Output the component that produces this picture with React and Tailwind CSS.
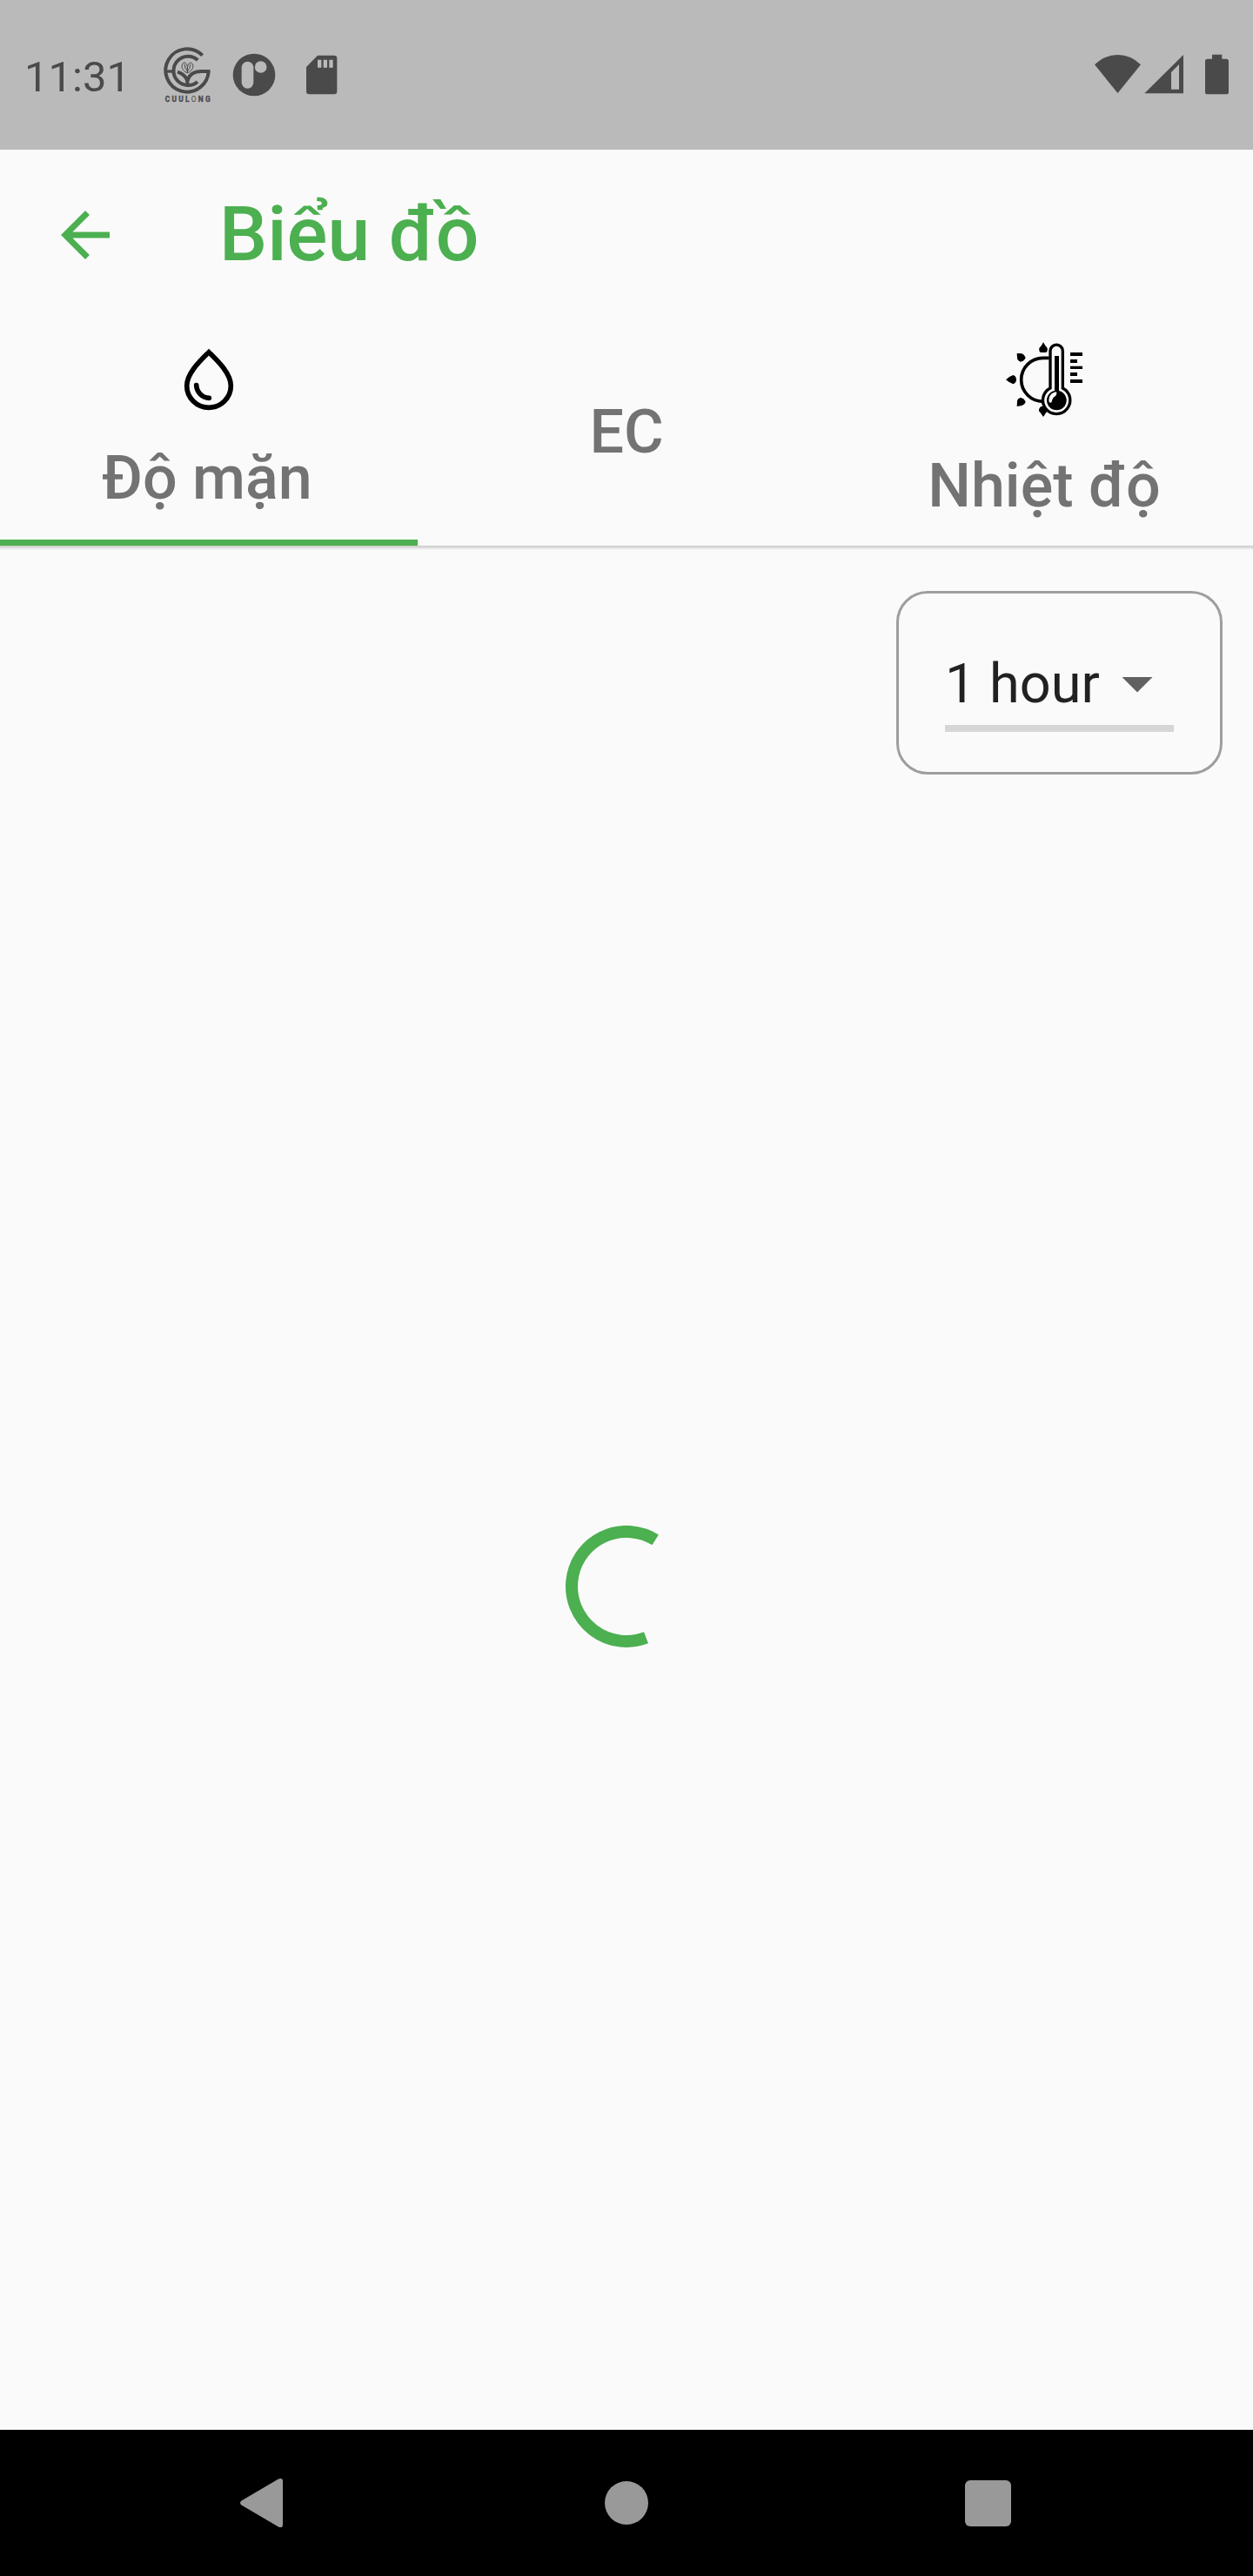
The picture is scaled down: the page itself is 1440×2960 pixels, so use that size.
const GREEN = "#4caf50";

function Logo() {
  return (
    <svg className="-mt-[2px] ml-[43px] h-[70px] w-[60px]" viewBox="555 30 180 210" fill="none" stroke="#4a4a4a">
      <path d="M698 71A74 74 0 1 0 719 124" strokeWidth="12" />
      <path d="M682 87A50 50 0 1 0 681 162" strokeWidth="12" />
      <path d="M570 126H600" strokeWidth="10" />
      <path d="M612 128Q638 136 646 158Q656 126 694 126H724" strokeWidth="12" />
      <path d="M646 150V176" strokeWidth="12" />
      <path d="M646 131C628 126 622 106 632 97C642 92 648 104 646 131C644 104 652 92 661 97C671 106 664 126 646 131M636 101Q637 118 645 123M657 101Q655 118 648 123" strokeWidth="3" />
      <text x="569" y="231" fill="#4a4a4a" stroke="#4a4a4a" strokeWidth="1" fontSize="25" fontWeight="700" fontFamily="Roboto, sans-serif" textLength="156" lengthAdjust="spacing">
        CUUL<tspan fontWeight="400" strokeWidth="0">O</tspan>NG
      </text>
    </svg>
  );
}

function StatusBar() {
  return (
    <header className="flex h-[172px] shrink-0 items-center bg-[#bababa] text-[#4a4a4a]">
      <span className="mt-[4px] ml-[28px] w-[114px] whitespace-nowrap text-[49px] leading-none">11:31</span>
      <Logo />
      <svg className="ml-[22px] h-[50px] w-[50px]" viewBox="802 64 150 150">
        <circle cx="877" cy="139" r="73" fill="#4a4a4a" />
        <rect x="834" y="93" width="41" height="93" rx="20.5" fill="#bababa" />
        <circle cx="900" cy="112" r="20.5" fill="#bababa" />
      </svg>
      <svg className="ml-[33px] h-[50px] w-[40px]" viewBox="1050 64 120 150">
        <path d="M1095 72H1152Q1162 72 1162 82V196Q1162 206 1152 206H1066Q1056 206 1056 196V112Z" fill="#4a4a4a" />
        <path d="M1095 87H1108V114H1095ZM1115 87H1128V114H1115ZM1135 87H1148V114H1135Z" fill="#bababa" />
      </svg>
      <svg className="mr-[20px] ml-auto h-[50px] w-[170px]" viewBox="90 64 510 150" fill="#4a4a4a">
        <path d="M114 104Q148 70 193.500 70Q239 70 273 104L193.500 202Z" />
        <path fillRule="evenodd" d="M286 203L420 70V203ZM378 130V189H405V103Z" />
        <path d="M519 69H553V84H568Q576 84 576 92V198Q576 206 568 206H503Q495 206 495 198V92Q495 84 503 84H519Z" />
      </svg>
    </header>
  );
}

function DropIcon() {
  return (
    <svg className="h-[84px] w-[84px]" viewBox="354 42 252 252" fill="none" stroke="#000" strokeWidth="17">
      <path d="M480 74C452 102 404 146 404 190A76 75 0 0 0 556 190C556 146 508 102 480 74Z" />
      <path d="M437 188C438 212 458 232 481 232" strokeLinecap="round" />
    </svg>
  );
}

function ThermometerIcon() {
  return (
    <svg className="h-[94px] w-[94px]" viewBox="339 57 282 282">
      <path d="M497 124H476A75 75 0 0 0 476 274" fill="none" stroke="#000" strokeWidth="11" />
      <path d="M477 70Q484 83 491 90Q493 105 484 105H470Q461 105 463 90Q471 83 477 70Z" />
      <path d="M386 108L404 109Q415 115 416 123Q410 137 398 137Q387 132 387 124Z" />
      <path d="M348 199Q360 187 373 183Q384 187 384 199Q384 210 373 214Q360 210 348 199Z" />
      <path d="M386 291L404 288Q415 282 416 275Q410 262 398 261Q387 266 387 273Z" />
      <path d="M477 327Q470 316 462 307Q461 296 470 291H484L491 307Q484 316 477 327Z" />
      <path d="M501 228V100A21.500 21.500 0 0 1 544 100V228A47 47 0 1 1 501 228Z" fill="#fafafa" stroke="#000" strokeWidth="10" />
      <path d="M516 117H531V250H516Z" />
      <circle cx="523" cy="270" r="34" />
      <path d="M497 276C494 257 504 243 522 241Q526 247 520 254Q508 260 506 276Q501 281 497 276Z" fill="#fafafa" />
      <path d="M570 105H612V117H570ZM570 129H594V141H570ZM570 152H612V162H570ZM570 174H594V186H570ZM570 198H612V210H570Z" />
    </svg>
  );
}

function Tab({ active, className, children }) {
  return (
    <div className="flex w-[480px] flex-col">
      <div className={"flex h-[252px] flex-col items-center text-[70px] font-medium leading-[82px] text-[#737373] " + className}>
        {children}
      </div>
      <div className={active ? "h-[7px] bg-[#4caf50]" : "h-[7px]"} />
    </div>
  );
}

export default function App() {
  return (
    <div className="flex h-[2960px] w-[1440px] flex-col overflow-hidden bg-[#fafafa] font-['Roboto',sans-serif]">
      <StatusBar />
      <div className="flex h-[196px] shrink-0 items-center">
        <svg className="ml-[56px] h-[84px] w-[84px]" viewBox="0 0 24 24" fill={GREEN}>
          <path d="M20 11H7.830l5.590-5.590L12 4l-8 8 8 8 1.410-1.410L7.830 13H20v-2z" />
        </svg>
        <h1 className="ml-[112px] text-[87.5px] font-medium leading-none text-[#4caf50]">Biểu đồ</h1>
      </div>
      <nav className="flex h-[259px] shrink-0">
        <Tab active className="pt-[26px]">
          <DropIcon />
          <span className="mt-[30px] mr-[4px]">Độ mặn</span>
        </Tab>
        <Tab className="justify-center pt-[4px]">
          <span>EC</span>
        </Tab>
        <Tab className="pt-[21px]">
          <ThermometerIcon />
          <span className="mt-[34px]">Nhiệt độ</span>
        </Tab>
      </nav>
      <div className="h-[5px] shrink-0 bg-linear-to-b from-[#c8c8c8] to-[#fafafa]" />
      <div className="mt-[47px] mr-[35px] flex h-[211px] w-[375px] shrink-0 flex-col self-end rounded-[36px] border-[3.5px] border-[#9e9e9e] px-[53px] pt-[61px]">
        <div className="flex h-[84px] items-center text-[63px] leading-none text-[#212121]">
          <span className="w-[179px] shrink-0 whitespace-nowrap">1 hour</span>
          <svg className="h-[84px] w-[84px] shrink-0" viewBox="0 0 24 24" fill="#616161">
            <path d="M7 10l5 5 5-5z" />
          </svg>
        </div>
        <div className="mt-[6px] h-[8px] w-[263px] shrink-0 bg-[#d6d6d6]" />
      </div>
      <main className="flex grow items-start justify-center pt-[863px]">
        <svg className="h-[140px] w-[140px]" viewBox="-70 -70 140 140" fill="none" stroke={GREEN} strokeWidth="14">
          <path d="M33.200 -53.600A63 63 0 1 0 22.500 58.800" />
        </svg>
      </main>
      <footer className="flex h-[168px] shrink-0 items-center bg-black">
        <svg className="ml-[274px] h-[60px] w-[54px]" viewBox="0 0 54 60" fill="#999">
          <path d="M3.500 27.500L46 2.500Q51 0.500 51 5V55Q51 59.500 46 57.500L3.500 32.500Q0.500 30 3.500 27.500Z" />
        </svg>
        <div className="ml-[367px] size-[50px] rounded-full bg-[#999]" />
        <div className="ml-[364px] size-[53px] rounded-[6px] bg-[#999]" />
      </footer>
    </div>
  );
}
